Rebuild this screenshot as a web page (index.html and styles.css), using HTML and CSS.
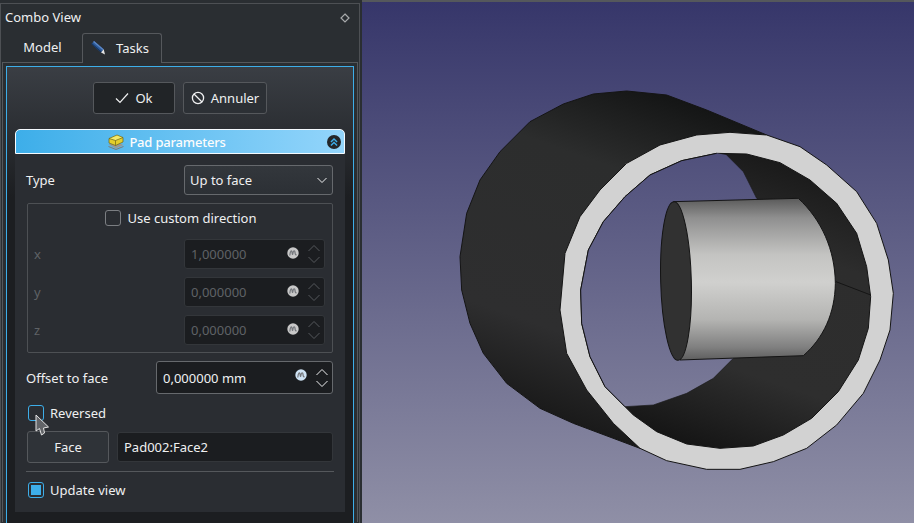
FILE: index.html
```html
<!DOCTYPE html>
<html lang="en">
<head>
    <meta charset="UTF-8">
    <title>Combo View - Pad parameters</title>
    <link rel="stylesheet" href="styles.css">
</head>
<body>

    <!-- shared little icons -->
    <svg class="defs" width="0" height="0">
        <symbol id="spin" viewBox="0 0 14 24">
            <path d="M1.5 9 L7 3.5 L12.5 9 M1.5 15 L7 20.5 L12.5 15" fill="none" stroke="currentColor" stroke-width="1"/>
        </symbol>
        <symbol id="expr" viewBox="0 0 12 12">
            <circle cx="6" cy="6" r="5.7" fill="currentColor"/>
            <path d="M2.8 8.5 C3.2 3.6 4.6 2.8 5 5 C5.3 7.4 5.6 8.6 6 6 C6.4 3.2 7.8 3 8 5.4 C8.2 7.6 8.8 8.4 9.4 7.4" fill="none" stroke="#74777c" stroke-width="1.2"/>
        </symbol>
    </svg>

    <div class="dock">
        <div class="dock-title">
            <span>Combo View</span>
            <svg class="float-icon" width="10" height="10" viewBox="0 0 10 10"><path d="M5 1 L9 5 L5 9 L1 5 Z" fill="none" stroke="#a8aaac" stroke-width="1.2"/></svg>
        </div>

        <div class="tabs">
            <div class="tab">Model</div>
            <div class="tab active">
                <svg width="14" height="14" viewBox="0 0 16 16">
                    <path d="M0.5 3.5 L3.5 0 L14.5 9.5 L11.5 13 Z" fill="#2c5a98"/>
                    <path d="M3.5 0 L14.5 9.5 L13.5 10.6 L2.4 1.2 Z" fill="#5c86c4"/>
                    <path d="M0.5 3.5 L11.5 13 L12.2 12.2 L1.2 2.7 Z" fill="#14315c"/>
                    <path d="M14.5 9.5 L16 15.5 L11.5 13 Z" fill="#e4e4e4"/>
                </svg>
                <span>Tasks</span>
            </div>
        </div>

        <div class="tab-pane">
            <div class="task-frame">

                <div class="dialog-btns">
                    <button class="btn btn-ok">
                        <svg width="14" height="12" viewBox="0 0 14 12"><path d="M1 6.5 L5 10.5 L13 1.5" fill="none" stroke="#eff0f1" stroke-width="1.2"/></svg>
                        Ok
                    </button>
                    <button class="btn btn-cancel">
                        <svg width="14" height="14" viewBox="0 0 14 14"><circle cx="7" cy="7" r="5.6" fill="none" stroke="#eff0f1" stroke-width="1.3"/><path d="M3 3 L11 11" stroke="#eff0f1" stroke-width="1.3"/></svg>
                        Annuler
                    </button>
                </div>

                <div class="group-head">
                    <svg width="16" height="16" viewBox="0 0 16 16">
                        <path d="M0.5 10.5 L8 8 L15.5 11 L8 14.5 Z" fill="#9a9a94"/>
                        <path d="M0.5 12.5 L8 15.5 L15.5 12.5" fill="none" stroke="#7c7c78" stroke-width="1"/>
                        <path d="M1 4.5 L9 1 L15 3.5 L15 8 L7.5 11.5 L1 9 Z" fill="#e3cf2c"/>
                        <path d="M1 4.5 L9 1 L15 3.5 L7.5 6.5 Z" fill="#f4ea6a"/>
                        <path d="M1 4.5 L7.5 6.5 L15 3.5 M7.5 6.5 L7.5 11.5 M1 4.5 L1 9 L7.5 11.5 L15 8 L15 3.5 L9 1 Z" fill="none" stroke="#6b6418" stroke-width=".7"/>
                    </svg>
                    <span>Pad parameters</span>
                    <svg class="collapse" width="14" height="14" viewBox="0 0 16 16">
                        <circle cx="8" cy="8" r="8" fill="#232629"/>
                        <path d="M4.5 8 L8 4.5 L11.5 8 M4.5 12 L8 8.5 L11.5 12" fill="none" stroke="#3daee9" stroke-width="1.6"/>
                    </svg>
                </div>

                <div class="group-body">
                    <div class="row type-row">
                        <label>Type</label>
                        <div class="select">
                            <span>Up to face</span>
                            <svg width="12" height="8" viewBox="0 0 12 8"><path d="M1.5 2 L6 6.5 L10.5 2" fill="none" stroke="#eff0f1" stroke-width="1"/></svg>
                        </div>
                    </div>

                    <div class="direction-box">
                        <div class="check-row centered">
                            <span class="check"></span>
                            <span>Use custom direction</span>
                        </div>
                        <div class="coord-row">
                            <label>x</label>
                            <div class="spinbox disabled"><span>1,000000</span><svg class="expr"><use href="#expr"/></svg><svg class="spin"><use href="#spin"/></svg></div>
                        </div>
                        <div class="coord-row">
                            <label>y</label>
                            <div class="spinbox disabled"><span>0,000000</span><svg class="expr"><use href="#expr"/></svg><svg class="spin"><use href="#spin"/></svg></div>
                        </div>
                        <div class="coord-row">
                            <label>z</label>
                            <div class="spinbox disabled"><span>0,000000</span><svg class="expr"><use href="#expr"/></svg><svg class="spin"><use href="#spin"/></svg></div>
                        </div>
                    </div>

                    <div class="row offset-row">
                        <label>Offset to face</label>
                        <div class="spinbox offset"><span>0,000000 mm</span><svg class="expr"><use href="#expr"/></svg><svg class="spin"><use href="#spin"/></svg></div>
                    </div>

                    <div class="check-row reversed">
                        <span class="check hover"></span>
                        <span>Reversed</span>
                        <svg class="cursor" width="15" height="23" viewBox="0 0 15 23">
                            <path d="M1 1 L1 17 L4.5 14.5 L6.5 21 L9.5 19 L8.5 14 L13.5 13 Z" fill="#626468" stroke="#e4e4e4" stroke-width="1"/>
                        </svg>
                    </div>

                    <div class="face-row">
                        <button class="btn btn-face">Face</button>
                        <div class="face-input">Pad002:Face2</div>
                    </div>

                    <div class="divider"></div>

                    <div class="check-row">
                        <span class="check checked"></span>
                        <span>Update view</span>
                    </div>
                </div>

            </div>
        </div>
    </div>

    <svg class="viewport" viewBox="362 0 552 523" width="552" height="523">
        <defs>
            <linearGradient id="sky" gradientUnits="userSpaceOnUse" x1="0" y1="0" x2="0" y2="523">
                <stop offset="0" stop-color="#36366a"/>
                <stop offset="1" stop-color="#8f8fa6"/>
            </linearGradient>
            <!-- same sky, in the coordinates of the scaled group below -->
            <linearGradient id="sky-group" gradientUnits="userSpaceOnUse" x1="0" y1="-270" x2="0" y2="1299">
                <stop offset="0" stop-color="#36366a"/>
                <stop offset="1" stop-color="#8f8fa6"/>
            </linearGradient>
            <linearGradient id="barrel" gradientUnits="userSpaceOnUse" x1="700" y1="30" x2="360" y2="1010">
                <stop offset="0" stop-color="#141515"/>
                <stop offset=".25" stop-color="#2c2d2d"/>
                <stop offset=".75" stop-color="#2e2e2f"/>
                <stop offset="1" stop-color="#191919"/>
            </linearGradient>
            <linearGradient id="bore" gradientUnits="userSpaceOnUse" x1="1060" y1="200" x2="760" y2="1080">
                <stop offset="0" stop-color="#171717"/>
                <stop offset=".3" stop-color="#2d2d2d"/>
                <stop offset=".72" stop-color="#2e2e2e"/>
                <stop offset="1" stop-color="#151515"/>
            </linearGradient>
            <linearGradient id="shaft" x1="0" y1="0" x2="0" y2="1">
                <stop offset="0" stop-color="#5a5a5a"/>
                <stop offset=".12" stop-color="#8f8f8f"/>
                <stop offset=".35" stop-color="#c4c4c2"/>
                <stop offset=".52" stop-color="#d0d0ce"/>
                <stop offset=".75" stop-color="#b4b4b2"/>
                <stop offset=".92" stop-color="#808080"/>
                <stop offset="1" stop-color="#5e5e5e"/>
            </linearGradient>
        </defs>

        <rect x="362" y="0" width="552" height="523" fill="url(#sky)"/>
        <rect x="362" y="0" width="552" height="2" fill="#55585c"/>

        <g transform="translate(450 90) scale(.33333)" stroke="#141414" stroke-width="3" stroke-linejoin="round">
            <!-- outer barrel -->
            <polygon fill="url(#barrel)" points="950,135 770,60 650,15 530,3 430,12 340,42 240,95 150,185 90,270 50,370 30,500 35,600 60,700 100,790 170,880 270,955 370,1000 570,1075 840,600"/>
            <!-- end face ring -->
            <polygon fill="#d2d2d2" points="840,127 950,135 1050,170 1130,225 1220,305 1280,400 1315,510 1330,610 1320,720 1290,810 1240,910 1160,1005 1070,1075 970,1115 870,1138 770,1138 650,1112 570,1075 490,1000 410,900 350,790 330,660 345,490 390,380 450,300 530,220 630,165 740,135"/>
            <!-- bore wall -->
            <polygon fill="url(#bore)" points="800,190 890,192 990,218 1080,270 1160,340 1220,430 1250,530 1262,620 1255,715 1225,810 1165,905 1085,985 1000,1035 910,1068 810,1075 710,1062 620,1025 550,975 465,890 420,800 395,700 392,600 415,480 460,395 525,320 600,255 695,212"/>
            <!-- see-through part of the bore -->
            <polygon fill="url(#sky-group)" stroke="none" points="800,190 830,195 880,245 920,325 930,600 850,805 790,865 710,910 610,945 525,950 465,890 420,800 395,700 392,600 415,480 460,395 525,320 600,255 695,212"/>
            <path d="M830 195 L880 245 L920 325 M850 805 L790 865 L710 910 L610 945 L525 950" fill="none" stroke="#1a1a1a" stroke-width="2"/>
            <path d="M800 190 L695 212 L600 255 L525 320 L460 395 L415 480 L392 600 L395 700 L420 800 L465 890 L525 950" fill="none"/>
            <!-- seam -->
            <path d="M1158 575 L1262 615" fill="none"/>
            <!-- inner cylinder -->
            <path fill="url(#shaft)" d="M670 335 L1045 325 C1115 390 1155 480 1156 580 C1155 670 1120 745 1060 797 L690 810 Z"/>
            <ellipse cx="678" cy="573" rx="46" ry="238" fill="#313131" transform="rotate(-1.5 678 573)"/>
        </g>
    </svg>

</body>
</html>
```

FILE: styles.css
```css
* { margin: 0; padding: 0; box-sizing: border-box; }
body {
    width: 914px; height: 523px; overflow: hidden; display: flex; align-items: flex-start;
    background: #2a2e32; color: #eff0f1; font-family: 'Noto Sans', sans-serif; font-size: 13px; line-height: 16px;
}
.defs { position: absolute; }

/* Dock */
.dock {
    width: 360px; height: 520px; margin-top: 3px; margin-right: 2px; flex: none;
    border: 1px solid #4d5054; border-bottom: none; padding: 0 1px;
}
.dock-title { height: 29px; padding: 0 0 4px 3px; display: flex; align-items: center; justify-content: space-between; }
.float-icon { margin: 2px 8px 0 0; }
.viewport { display: block; flex: none; }

/* Tabs */
.tabs { height: 29px; display: flex; padding-left: 1px; }
.tab { width: 79px; display: flex; align-items: center; justify-content: center; padding-bottom: 1px; }
.tab.active {
    width: 80px; gap: 11px; justify-content: flex-start; padding: 0 0 2px 8px;
    border: 1px solid #55585c; border-bottom: none; border-radius: 3px 3px 0 0;
    background: #2a2e32; position: relative; height: 30px; z-index: 1;
}
.tab-pane { width: 356px; height: 460px; border: 1px solid #55585c; border-bottom: none; padding: 3px 3px 0; }

/* Task frame */
.task-frame {
    width: 348px; height: 460px; border: 1px solid #3daee9; border-bottom: none; padding: 15px 8px 0;
    background: linear-gradient(#3a3e44, #1c1e21 130px);
}
.dialog-btns { display: flex; justify-content: center; gap: 8px; margin-bottom: 15px; }
.btn {
    height: 32px; border: 1px solid #55585c; border-radius: 3px; color: #eff0f1; font: inherit;
    display: flex; align-items: center; justify-content: center; gap: 6px;
}
.btn-ok { width: 82px; background: #212427; }
.btn-cancel { width: 84px; background: #2c3035; }

/* Group header */
.group-head {
    height: 25px; display: flex; align-items: center; justify-content: center; gap: 4px; position: relative;
    background: linear-gradient(to right, #3daee9, #93d5fb); border-radius: 5px 5px 0 0;
    border: 1px solid #f4fafe; color: #fcfcfc; font-weight: 500; letter-spacing: -.2px; padding-right: 26px;
}
.group-head span { margin-left: 1px; }
.collapse { position: absolute; right: 3px; top: 5px; }

/* Group body */
.group-body { height: 358px; background: #2a2d32; padding: 11px 12px 14px 11px; }
.row { display: flex; align-items: center; justify-content: space-between; }
.type-row { height: 30px; margin-bottom: 8px; }
.select {
    width: 149px; height: 30px; border: 1px solid #66696d; border-radius: 3px; background: linear-gradient(#33373c, #2c3035);
    display: flex; align-items: center; justify-content: space-between; padding: 0 4px 0 5px;
}

/* Custom direction box */
.direction-box { height: 150px; margin-left: 1px; border: 1px solid #4d5054; border-radius: 2px; padding: 6px 7px 0 6px; }
.check-row { height: 16px; display: flex; align-items: center; gap: 6px; margin-left: 2px; position: relative; }
.check-row.centered { justify-content: center; margin: 0 0 13px 0; padding-left: 3px; }
.check { width: 16px; height: 16px; border: 1px solid #7b7e82; border-radius: 3px; background: #2a2d32; flex: none; }
.check.hover { border-color: #3daee9; }
.check.checked { border-color: #3daee9; padding: 2px; background: #3daee9 content-box; }
.coord-row { height: 30px; margin-bottom: 8px; display: flex; align-items: center; justify-content: space-between; color: #5f6266; }

/* Spin boxes */
.spinbox {
    height: 30px; width: 141px; background: #1b1d20; border: 1px solid #33363a; border-radius: 3px;
    display: flex; align-items: center; padding-left: 6px; position: relative;
}
.spinbox span { flex: 1; }
.expr { width: 12px; height: 12px; color: #c8c8c8; margin-right: 8px; margin-top: -3px; }
.spin { width: 14px; height: 24px; color: #55585c; margin-right: 3px; }
.disabled { color: #5f6266; }
.offset-row { height: 33px; margin-top: 8px; }
.spinbox.offset { width: 177px; height: 33px; border-color: #66696d; }
.offset .expr { color: #cfe3f5; margin-top: -5px; }
.offset .spin { color: #eff0f1; }

/* Reversed + face */
.reversed { margin-top: 11px; }
.cursor { position: absolute; left: 7px; top: 9px; }
.face-row { height: 32px; margin: 10px 0 0 1px; display: flex; align-items: center; gap: 8px; }
.btn-face { width: 82px; background: #2f3338; }
.face-input {
    width: 216px; height: 30px; background: #1b1d20; border: 1px solid #33363a; border-radius: 3px;
    display: flex; align-items: center; padding-left: 6px;
}
.divider { height: 1px; background: #55585c; margin: 8px 0 10px; width: 308px; }
```
